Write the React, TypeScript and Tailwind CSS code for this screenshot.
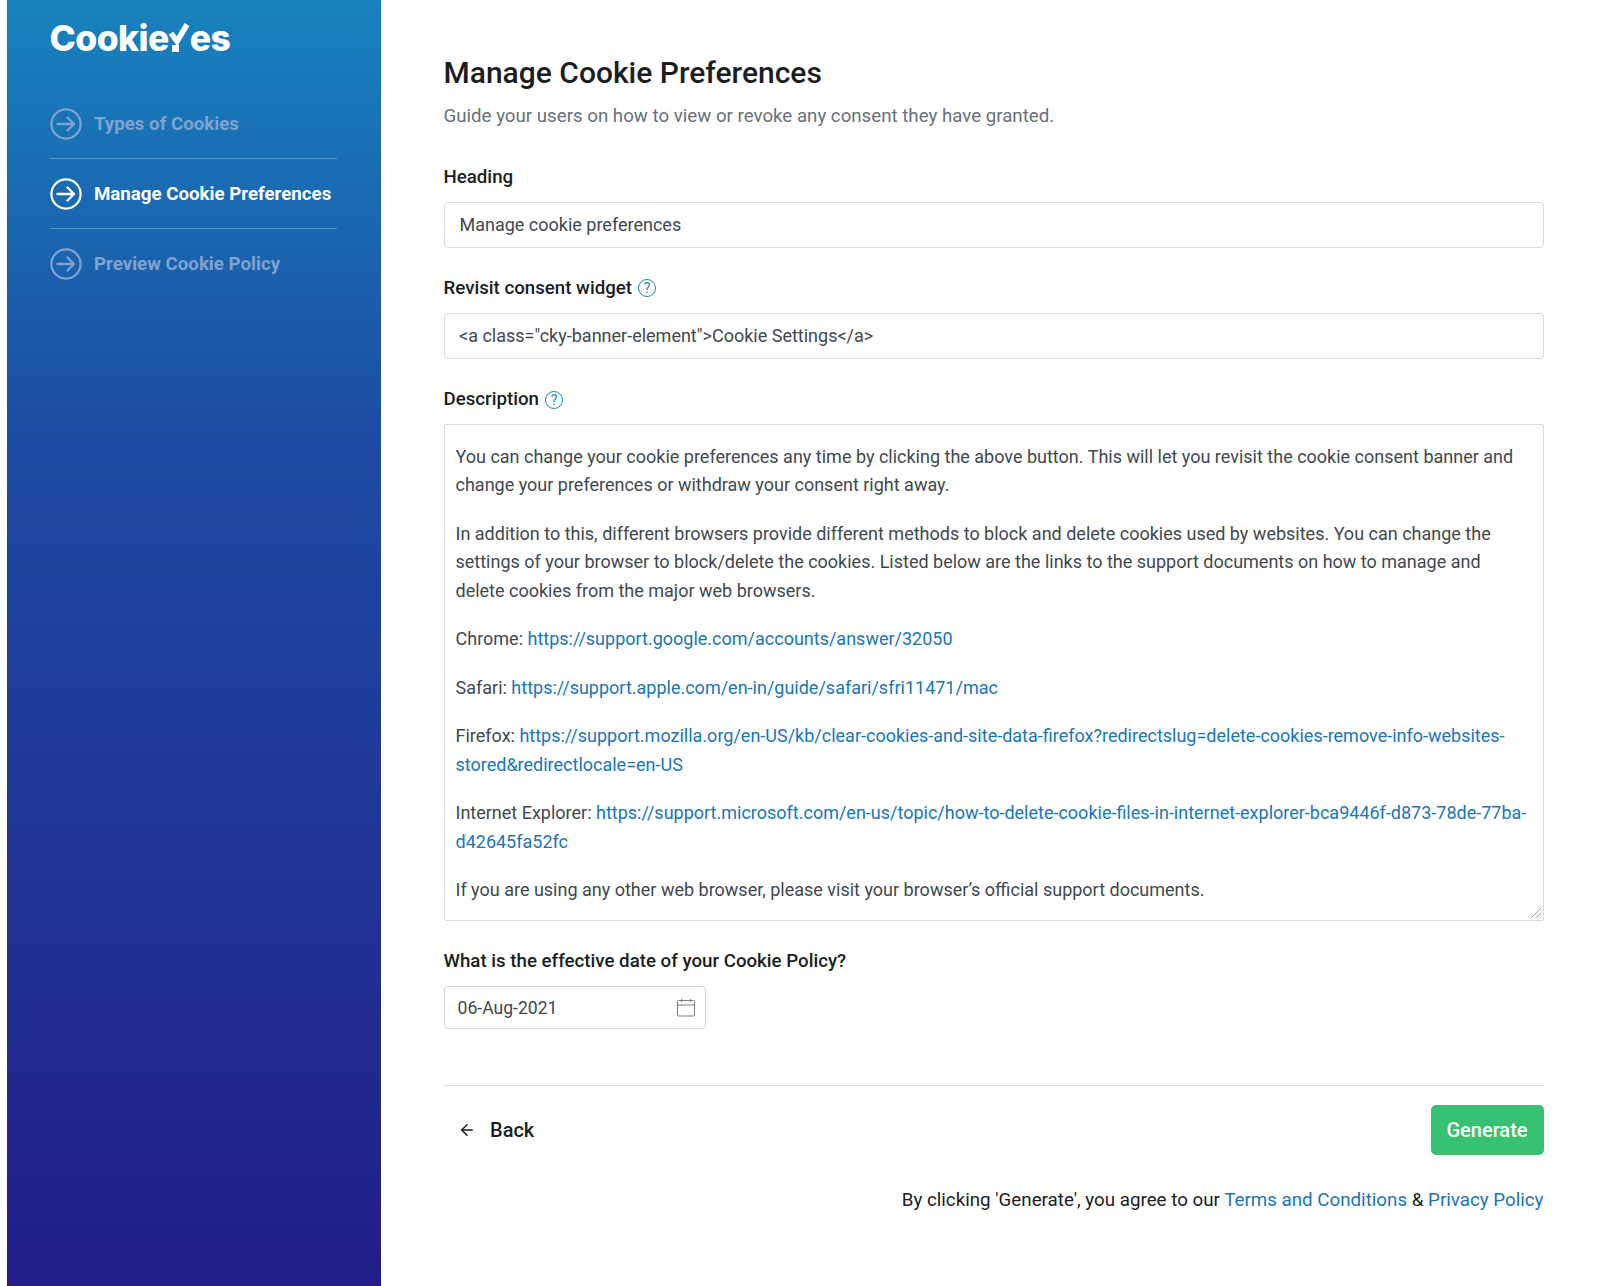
import { ArrowLeft } from "lucide-react";

const navItems = [
  { label: "Types of Cookies", active: false },
  { label: "Manage Cookie Preferences", active: true },
  { label: "Preview Cookie Policy", active: false },
];

function ArrowCircle({ active }: { active: boolean }) {
  return (
    <svg width="32" height="32" viewBox="0 0 32 32" fill="none" stroke="currentColor" strokeWidth="2.2" className={active ? "text-white shrink-0" : "text-[#7fa3d0] shrink-0"}>
      <circle cx="16" cy="16" r="14.6" />
      <path d="M7.5 16H24M17.5 9.5L24 16L17.5 22.5" strokeLinecap="round" strokeLinejoin="round" strokeWidth="2.4" />
    </svg>
  );
}

function HelpIcon() {
  return (
    <span className="ml-[6px] inline-flex h-[18px] w-[18px] items-center justify-center rounded-full border border-[#1e84c4] text-[14px] font-normal leading-none text-[#1e84c4]">?</span>
  );
}

function Link({ children }: { children: React.ReactNode }) {
  return <a className="text-[#1a76b5]">{children}</a>;
}

export default function App() {
  return (
    <div className="flex h-[1286px] bg-white pl-[6.5px] font-['Roboto',sans-serif] text-[#1b1d1f]">
      <aside className="w-[374px] shrink-0 bg-gradient-to-b from-[#1782be] via-[#1d4aa0] via-35% to-[#211c87] pl-[43px] pr-[43.5px]">
        <div className="flex h-[89px] items-start pt-[18px] font-['Inter',sans-serif] text-[35.5px] font-extrabold leading-[42px] tracking-[-0.6px] text-white">
          <span>Cookie</span>
          <svg width="21" height="29" viewBox="0 0 21 29" className="mt-[5px] shrink-0" fill="none" stroke="white">
            <path d="M2 10L8 18.5L18 1.5" strokeWidth="5.5" />
            <rect x="3" y="22" width="7" height="7" fill="white" stroke="none" />
          </svg>
          <span>es</span>
        </div>
        <nav className="pl-[0.5px]">
          {navItems.map((item, i) => (
            <div key={item.label} className={i < 2 ? "flex h-[70px] items-center gap-[12px] border-b border-white/25" : "flex h-[70px] items-center gap-[12px]"}>
              <ArrowCircle active={item.active} />
              <span className={item.active ? "pt-[1px] text-[18.7px] font-bold text-white" : "pt-[1px] text-[18.7px] font-bold text-[#7fa3d0]"}>{item.label}</span>
            </div>
          ))}
        </nav>
      </aside>

      <main className="ml-[63px] w-[1100px] pt-[53px]">
        <h1 className="text-[30px] font-medium leading-[40px]">Manage Cookie Preferences</h1>
        <p className="mt-[11px] text-[18.7px] leading-[24px] text-[#68717b]">Guide your users on how to view or revoke any consent they have granted.</p>

        <label className="mt-[37px] block text-[18.7px] font-medium leading-[24px]">Heading</label>
        <div className="mt-[13px] flex h-[46px] items-center rounded-[4px] border border-[#d5dbe2] px-[15px] pb-[1px] text-[18px] text-[#41484f]">Manage cookie preferences</div>

        <label className="mt-[28px] flex items-center text-[18.7px] font-medium leading-[24px]">Revisit consent widget<HelpIcon /></label>
        <div className="mt-[13px] flex h-[46px] items-center rounded-[4px] border border-[#d5dbe2] px-[14.5px] pb-[1px] text-[18px] text-[#41484f]">{'<a class="cky-banner-element">Cookie Settings</a>'}</div>

        <label className="mt-[28px] flex items-center pt-[1px] text-[18.7px] font-medium leading-[23px]">Description<HelpIcon /></label>
        <div className="relative mt-[13px] flex h-[497px] flex-col gap-[20px] rounded-[2px] border border-[#d5dbe2] px-[11px] pt-[17.5px] text-[18px] leading-[28.5px] text-[#41484f]">
          <p>You can change your cookie preferences any time by clicking the above button. This will let you revisit the cookie consent banner and change your preferences or withdraw your consent right away.</p>
          <p>In addition to this, different browsers provide different methods to block and delete cookies used by websites. You can change the settings of your browser to block/delete the cookies. Listed below are the links to the support documents on how to manage and delete cookies from the major web browsers.</p>
          <p>Chrome: <Link>https://support.google.com/accounts/answer/32050</Link></p>
          <p>Safari: <Link>https://support.apple.com/en-in/guide/safari/sfri11471/mac</Link></p>
          <p>Firefox: <Link>https://support.mozilla.org/en-US/kb/clear-cookies-and-site-data-firefox?redirectslug=delete-cookies-remove-info-websites-stored&amp;redirectlocale=en-US</Link></p>
          <p>Internet Explorer: <Link>https://support.microsoft.com/en-us/topic/how-to-delete-cookie-files-in-internet-explorer-bca9446f-d873-78de-77ba-d42645fa52fc</Link></p>
          <p>If you are using any other web browser, please visit your browser’s official support documents.</p>
          <svg width="12" height="12" viewBox="0 0 12 12" stroke="#9aa1a8" strokeWidth="1" className="absolute bottom-[1px] right-[1px]">
            <path d="M1 11L11 1M6 11L11 6" />
          </svg>
        </div>

        <label className="mt-[28px] block text-[18.7px] font-medium leading-[24px]">What is the effective date of your Cookie Policy?</label>
        <div className="mt-[13px] flex h-[43px] w-[262px] items-center justify-between rounded-[4px] border border-[#d0d4d9] pl-[13px] pr-[9px] pt-[1px] text-[17.6px] text-[#41484f]">
          <span>06-Aug-2021</span>
          <svg width="20" height="20" viewBox="0 0 20 20" fill="none" stroke="#777d83" strokeWidth="1">
            <rect x="1.5" y="2.5" width="17" height="15.5" rx="1" />
            <path d="M1.5 7H18.5M5.5 1V4M14.5 1V4" />
          </svg>
        </div>

        <div className="mt-[56px] flex items-center justify-between border-t border-[#d8dbdf] pt-[19px]">
          <button className="flex items-center pl-[14px] text-[20px] font-medium text-[#1b1d1f]">
            <ArrowLeft size={18} strokeWidth={2} />
            <span className="ml-[14.5px]">Back</span>
          </button>
          <button className="flex h-[50px] w-[113px] items-center justify-center rounded-[5px] bg-[#38c172] text-[20px] font-medium text-white">Generate</button>
        </div>

        <p className="mt-[32px] text-right text-[18.75px] leading-[26px]">
          By clicking 'Generate', you agree to our <Link>Terms and Conditions</Link> &amp; <Link>Privacy Policy</Link>
        </p>
      </main>
    </div>
  );
}
